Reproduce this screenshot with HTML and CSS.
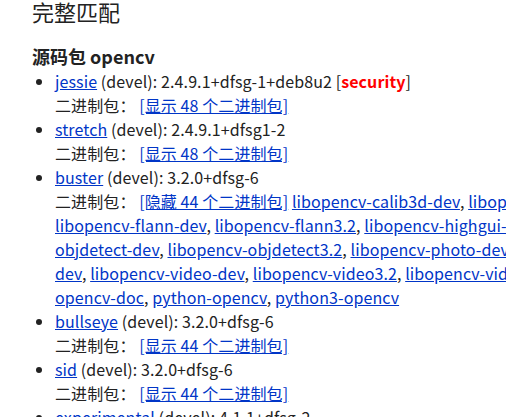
FILE: index.html
```html
<!DOCTYPE html>
<html lang="zh-CN">
<head>
    <meta charset="UTF-8">
    <title>软件包搜索结果 -- opencv</title>
    <link rel="stylesheet" href="styles.css">
</head>
<body>
    <div class="page">
        <h1>完整匹配</h1>
        <h2>源码包 opencv</h2>
        <ul class="suites">
            <li>
                <a href="#">jessie</a> (devel): 2.4.9.1+dfsg-1+deb8u2 [<span class="security">security</span>]
                <br>二进制包： <a href="#">[显示 48 个二进制包]</a>
            </li>
            <li>
                <a href="#">stretch</a> (devel): 2.4.9.1+dfsg1-2
                <br>二进制包： <a href="#">[显示 48 个二进制包]</a>
            </li>
            <li>
                <a href="#">buster</a> (devel): 3.2.0+dfsg-6
                <div class="binaries">二进制包： <a href="#">[隐藏 44 个二进制包]</a> <a href="#">libopencv-calib3d-dev</a>, <a href="#">libopencv-calib3d3.2</a>, <a href="#">libopencv-contrib-dev</a>, <a href="#">libopencv-contrib3.2</a>, <a href="#">libopencv-core-dev</a>, <a href="#">libopencv-core3.2</a>, <a href="#">libopencv-dev</a>, <a href="#">libopencv-features2d-dev</a>, <a href="#">libopencv-features2d3.2</a>,<br><a href="#">libopencv-flann-dev</a>, <a href="#">libopencv-flann3.2</a>, <a href="#">libopencv-highgui-dev</a>, <a href="#">libopencv-highgui3.2</a>, <a href="#">libopencv-imgcodecs-dev</a>, <a href="#">libopencv-imgcodecs3.2</a>, <a href="#">libopencv-imgproc-dev</a>, <a href="#">libopencv-imgproc3.2</a>, <a href="#">libopencv-ml-dev</a>, <a href="#">libopencv-ml3.2</a>, <a href="#">libopencv-</a><br><a href="#">objdetect-dev</a>, <a href="#">libopencv-objdetect3.2</a>, <a href="#">libopencv-photo-dev</a>, <a href="#">libopencv-photo3.2</a>, <a href="#">libopencv-shape-dev</a>, <a href="#">libopencv-shape3.2</a>, <a href="#">libopencv-stitching-dev</a>, <a href="#">libopencv-stitching3.2</a>, <a href="#">libopencv-ts-</a><br><a href="#">dev</a>, <a href="#">libopencv-video-dev</a>, <a href="#">libopencv-video3.2</a>, <a href="#">libopencv-videoio-dev</a>, <a href="#">libopencv-videoio3.2</a>, <a href="#">libopencv-videostab-dev</a>, <a href="#">libopencv-videostab3.2</a>, <a href="#">libopencv3.2-java</a>, <a href="#">opencv-data</a>,<br><a href="#">opencv-doc</a>, <a href="#">python-opencv</a>, <a href="#">python3-opencv</a></div>
            </li>
            <li>
                <a href="#">bullseye</a> (devel): 3.2.0+dfsg-6
                <br>二进制包： <a href="#">[显示 44 个二进制包]</a>
            </li>
            <li>
                <a href="#">sid</a> (devel): 3.2.0+dfsg-6
                <br>二进制包： <a href="#">[显示 44 个二进制包]</a>
            </li>
            <li>
                <a href="#">experimental</a> (devel): 4.1.1+dfsg-2
                <br>二进制包： <a href="#">[显示 48 个二进制包]</a>
            </li>
        </ul>
    </div>
</body>
</html>
```

FILE: styles.css
```css
html, body {
    margin: 0;
    overflow: hidden;
}
body {
    background-color: #fff;
    color: #222;
    font-family: "Noto Sans CJK SC", "Noto Sans", sans-serif;
    font-size: 16px;
}
.page {
    padding: 0 0 0 32px;
}
h1 {
    margin: 0;
    font-size: 22px;
    line-height: 22px;
    font-weight: normal;
}
h2 {
    margin: 22px 0 0 0;
    font-size: 18px;
    line-height: 25px;
    font-weight: bold;
}
a {
    color: #0035c7;
    text-decoration: underline;
}
.suites {
    margin: 0;
    padding-left: 23px;
    line-height: 24px;
    letter-spacing: 0.1px;
}
.binaries {
    white-space: nowrap;
}
.security {
    color: #f00;
    font-weight: bold;
}
```
